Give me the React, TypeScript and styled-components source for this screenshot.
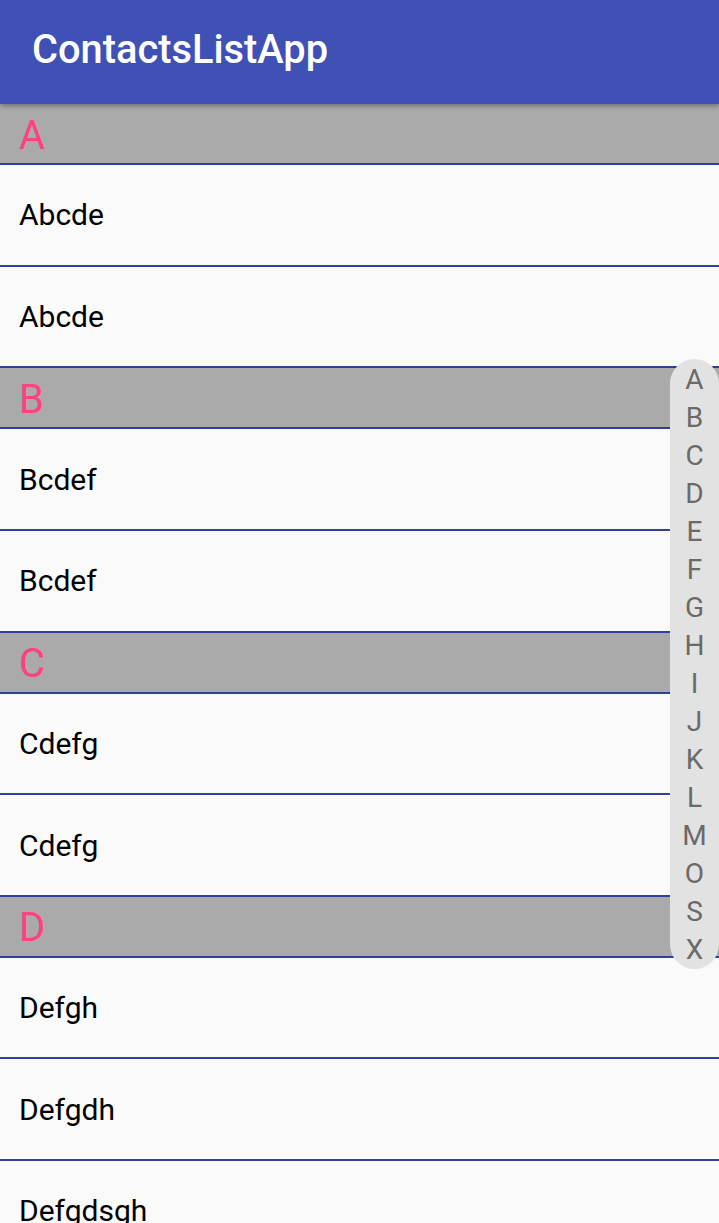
import React from "react";
import styled, { createGlobalStyle } from "styled-components";

const GlobalStyle = createGlobalStyle`
  html, body { margin: 0; padding: 0; }
  body {
    font-family: Roboto, "Noto Sans", "Liberation Sans", sans-serif;
    background: #fafafa;
    overflow: hidden;
  }
`;

const Screen = styled.div`
  height: 100vh;
  display: flex;
  flex-direction: column;
  background: #fafafa;
`;

const AppBar = styled.header`
  height: 104px;
  flex: 0 0 104px;
  background: #3f51b5;
  display: flex;
  align-items: center;
  padding: 0 0 6px 32px;
  box-sizing: border-box;
  box-shadow: 0 2px 5px rgba(0, 0, 0, 0.35);
  position: relative;
  z-index: 2;
`;

const Title = styled.h1`
  margin: 0;
  color: #ffffff;
  font-size: 39.8px;
  font-weight: 500;
  letter-spacing: 0;
`;

const Content = styled.main`
  flex: 1;
  position: relative;
  overflow: hidden;
`;

const List = styled.div`
  display: flex;
  flex-direction: column;
`;

const SectionHeader = styled.div`
  box-sizing: content-box;
  height: 56px;
  padding: 3px 0 0 19px;
  background: #aaaaaa;
  border-bottom: 2px solid #303f9f;
  display: flex;
  align-items: center;
  color: #ff4081;
  font-size: 40px;
  font-weight: 400;
`;

const Row = styled.div`
  height: 99.65px;
  border-bottom: 2px solid #303f9f;
  display: flex;
  align-items: center;
  padding-left: 19px;
  color: #000000;
  font-size: 30px;
`;

const IndexBar = styled.nav`
  position: absolute;
  right: 0;
  top: 50%;
  transform: translateY(-50%);
  width: 49px;
  padding-top: 2px;
  box-sizing: border-box;
  background: #e2e2e2;
  border-radius: 25px;
  display: flex;
  flex-direction: column;
  align-items: center;
  z-index: 1;
`;

const IndexLetter = styled.span`
  height: 38px;
  line-height: 38px;
  font-size: 28px;
  color: #6a6a6a;
`;

const sections: { letter: string; names: string[] }[] = [
  { letter: "A", names: ["Abcde", "Abcde"] },
  { letter: "B", names: ["Bcdef", "Bcdef"] },
  { letter: "C", names: ["Cdefg", "Cdefg"] },
  { letter: "D", names: ["Defgh", "Defgdh", "Defgdsgh", "Defgdsgh"] },
];

const indexLetters = ["A", "B", "C", "D", "E", "F", "G", "H", "I", "J", "K", "L", "M", "O", "S", "X"];

export default function App() {
  return (
    <>
      <GlobalStyle />
      <Screen>
        <AppBar>
          <Title>ContactsListApp</Title>
        </AppBar>
        <Content>
          <List>
            {sections.map((s) => (
              <React.Fragment key={s.letter}>
                <SectionHeader>{s.letter}</SectionHeader>
                {s.names.map((n, i) => (
                  <Row key={s.letter + i}>{n}</Row>
                ))}
              </React.Fragment>
            ))}
          </List>
          <IndexBar>
            {indexLetters.map((l) => (
              <IndexLetter key={l}>{l}</IndexLetter>
            ))}
          </IndexBar>
        </Content>
      </Screen>
    </>
  );
}
